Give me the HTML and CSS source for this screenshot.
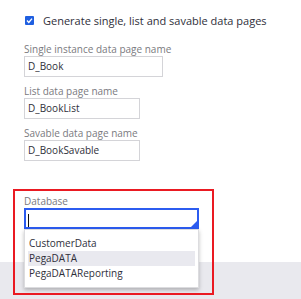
FILE: index.html
```html
<!DOCTYPE html>
<html lang="en">
<head>
    <meta charset="UTF-8">
    <title>Data pages</title>
    <link rel="stylesheet" href="styles.css">
</head>
<body>
    <div class="form">
        <label class="check-row">
            <span class="checkbox">
                <svg width="9" height="9" viewBox="0 0 9 9"><path d="M2 4.6 L3.8 6.4 L7 2.6" fill="none" stroke="#fff" stroke-width="1.4"/></svg>
            </span>
            <span class="check-text">Generate single, list and savable data pages</span>
        </label>

        <div class="field">
            <div class="label">Single instance data page name</div>
            <div class="input wide">D_Book</div>
        </div>
        <div class="field">
            <div class="label">List data page name</div>
            <div class="input">D_BookList</div>
        </div>
        <div class="field">
            <div class="label">Savable data page name</div>
            <div class="input">D_BookSavable</div>
        </div>

        <div class="field db-field">
            <div class="label">Database</div>
            <div class="combo">
                <div class="input focus"><span class="caret"></span></div>
                <ul class="menu">
                    <li>CustomerData</li>
                    <li class="active">PegaDATA</li>
                    <li>PegaDATAReporting</li>
                </ul>
            </div>
        </div>
    </div>
    <div class="footer"></div>
    <div class="highlight-box"></div>
</body>
</html>
```

FILE: styles.css
```css
body {
    margin: 0;
    font-family: "Open Sans", Arial, sans-serif;
    background-color: #fff;
    color: #2f2f3a;
    position: relative;
    height: 299px;
    overflow: hidden;
}
.form {
    height: 262px;
    box-sizing: border-box;
    padding: 13px 0 0 24px;
}
.check-row {
    display: flex;
    align-items: center;
    padding-left: 1px;
    font-size: 11px;
}
.checkbox {
    width: 9px;
    height: 9px;
    background-color: #1f5fe0;
    border-radius: 1px;
    display: flex;
    margin-right: 9px;
}
.field {
    margin-top: 6px;
}
.check-row + .field {
    margin-top: 15px;
}
.label {
    font-size: 10px;
    color: #7a7a80;
    line-height: 13px;
}
.input {
    width: 116px;
    height: 21px;
    box-sizing: border-box;
    border: 1px solid #d4d4d8;
    font-size: 10px;
    line-height: 19px;
    padding-left: 3px;
    margin-bottom: 8px;
}
.input.wide {
    width: 139px;
}
.db-field {
    margin-top: 34px;
}
.combo {
    position: relative;
    width: 175px;
}
.input.focus {
    width: 175px;
    border: 2px solid #2c5cf0;
    position: relative;
    margin-bottom: 0;
    padding-left: 2px;
}
.input.focus::after {
    content: "";
    position: absolute;
    right: 0;
    bottom: 0;
    border-left: 6px solid transparent;
    border-bottom: 6px solid #2c5cf0;
}
.caret {
    display: inline-block;
    width: 1px;
    height: 13px;
    background-color: #111;
    vertical-align: middle;
}
.menu {
    position: absolute;
    top: 21px;
    left: 0;
    width: 175px;
    box-sizing: border-box;
    margin: 0;
    padding: 6px 3px 6px;
    list-style: none;
    background-color: #fff;
    border: 1px solid #dcdcdf;
    box-shadow: 0 2px 4px rgba(0, 0, 0, 0.25);
    font-size: 10px;
    z-index: 2;
}
.menu li {
    height: 15px;
    line-height: 15px;
    padding-left: 1px;
}
.menu li.active {
    background-color: #e9e9ef;
}
.footer {
    height: 37px;
    background-color: #e9e9ee;
}
.highlight-box {
    position: absolute;
    left: 13px;
    top: 189px;
    width: 197px;
    height: 102px;
    border: 2px solid #ea1a22;
    z-index: 3;
}
```
